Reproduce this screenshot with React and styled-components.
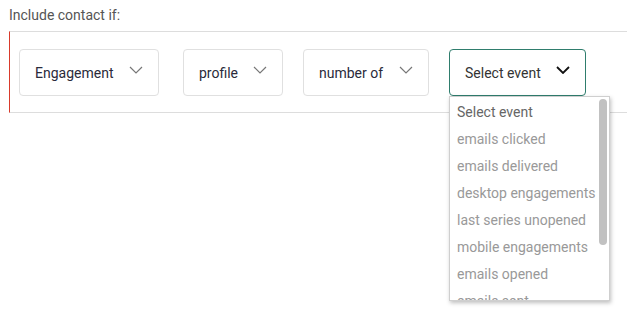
import React from "react";
import styled, { createGlobalStyle } from "styled-components";

const Global = createGlobalStyle`
  html, body { margin: 0; padding: 0; background: #fff; }
  body { font-family: Roboto, "Liberation Sans", Arial, sans-serif; }
`;

const Page = styled.div`
  width: 627px;
  height: 321px;
  padding: 6px 0 0 9px;
  box-sizing: border-box;
  position: relative;
`;

const Title = styled.div`
  font-size: 14px;
  line-height: 18px;
  color: #555;
  margin-bottom: 7px;
`;

const Rule = styled.div`
  display: flex;
  align-items: center;
  gap: 20px;
  border-top: 1px solid #ddd;
  border-bottom: 1px solid #ddd;
  border-left: 1px solid #d93a2b;
  padding: 17px 0 16px 9px;
`;

const SelectBox = styled.div`
  position: relative;
  display: flex;
  align-items: center;
  justify-content: space-between;
  width: ${(p) => p.$w}px;
  height: 47px;
  box-sizing: border-box;
  padding: 0 15px 0 15px;
  border: 1px solid ${(p) => (p.$open ? "#2f7d6d" : "#e0e0e0")};
  border-radius: 4px;
  font-size: 14px;
  color: ${(p) => (p.$open ? "#333" : "#2a2a3a")};
  background: #fff;
  margin-right: ${(p) => p.$mr || 0}px;
`;

const Label = styled.span`
  line-height: 18px;
`;

const Chevron = ({ dark }) => (
  <svg width="14" height="8" viewBox="0 0 14 8" style={{ marginTop: -6 }}>
    <path
      d="M1 1 L7 7 L13 1"
      fill="none"
      stroke={dark ? "#111" : "#777"}
      strokeWidth={dark ? 1.8 : 1.2}
    />
  </svg>
);

const Menu = styled.div`
  position: absolute;
  top: 46px;
  left: -1px;
  width: 161px;
  height: 205px;
  box-sizing: border-box;
  background: #fff;
  border: 1px solid #cfcfcf;
  box-shadow: 1px 2px 4px rgba(0, 0, 0, 0.25);
  overflow: hidden;
  z-index: 2;
`;

const Option = styled.div`
  height: 27px;
  line-height: 27px;
  padding-left: 7px;
  font-size: 14px;
  white-space: nowrap;
  color: ${(p) => (p.$first ? "#666" : "#999")};
  &:first-child { margin-top: 2px; }
`;

const Thumb = styled.div`
  position: absolute;
  top: 2px;
  right: 2px;
  width: 8px;
  height: 146px;
  border-radius: 4px;
  background: #c1c1c1;
`;

const options = [
  "Select event",
  "emails clicked",
  "emails delivered",
  "desktop engagements",
  "last series unopened",
  "mobile engagements",
  "emails opened",
  "emails sent",
];

export default function App() {
  return (
    <Page>
      <Global />
      <Title>Include contact if:</Title>
      <Rule>
        <SelectBox $w={140} $mr={4}>
          <Label>Engagement</Label>
          <Chevron />
        </SelectBox>
        <SelectBox $w={100}>
          <Label>profile</Label>
          <Chevron />
        </SelectBox>
        <SelectBox $w={126}>
          <Label>number of</Label>
          <Chevron />
        </SelectBox>
        <SelectBox $w={137} $open>
          <Label>Select event</Label>
          <Chevron dark />
          <Menu>
            {options.map((o, i) => (
              <Option key={o} $first={i === 0}>
                {o}
              </Option>
            ))}
            <Thumb />
          </Menu>
        </SelectBox>
      </Rule>
    </Page>
  );
}
